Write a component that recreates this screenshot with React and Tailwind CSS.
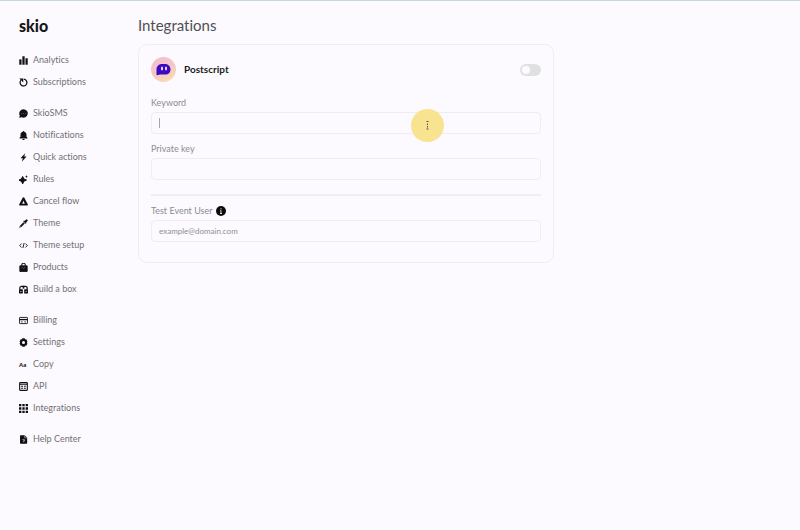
import React, { useState } from 'react';

const paths = {
  analytics: (
    <>
      <rect x="0.5" y="6" width="4" height="9.500" />
      <rect x="6" y="0.500" width="4" height="15" />
      <rect x="11.500" y="4" width="4" height="11.500" />
    </>
  ),
  subscriptions: (
    <>
      <path d="M3.300 4.400A6 6 0 1 0 8.500 2.200" fill="none" stroke="currentColor" strokeWidth="2.200" />
      <path d="M.5.800h7v7z" />
    </>
  ),
  sms: (
    <>
      <path d="M8 .3a7.600 7.600 0 1 1-3.200 14.500L.4 15.700l1-4.200A7.600 7.600 0 0 1 8 .3z" />
      <path d="M4 8h1.600M7.200 8h1.600M10.400 8H12" stroke="#777" strokeWidth="1.200" />
    </>
  ),
  bell: <path d="M8 0c.9 0 1.400.6 1.400 1.400 2.400.6 3.900 2.500 3.900 5.100v3.700l1.700 2v1.100H1v-1.100l1.700-2V6.500c0-2.600 1.500-4.500 3.900-5.100C6.600.6 7.100 0 8 0zM5.900 14h4.200a2.100 2.100 0 0 1-4.200 0z" />,
  bolt: <path d="M11 .3 2.700 9.300h4.100L5 15.700l8.500-9.500H9.300z" />,
  rules: (
    <>
      <path d="M6.500 3 8.500 7l4.500 2-4.500 2-2 4-2-4L0 9l4.500-2z" strokeWidth="2" stroke="currentColor" strokeLinejoin="round" />
      <path d="m13.300 0 .8 2 1.900.8-1.900.8-.8 2-.8-2-1.900-.8 1.900-.8z" />
    </>
  ),
  cancel: <path fillRule="evenodd" d="M8 .5c.7 0 1.200.3 1.500.9l6.200 11.800c.5 1.100-.1 2.100-1.200 2.100h-13c-1.100 0-1.700-1-1.200-2.100L6.500 1.400C6.800.8 7.300.5 8 .5zm0 6.300-2.300 5h4.600z" />,
  theme: (
    <>
      <path d="M10 3.400 12.200 1.200a1.800 1.800 0 0 1 2.600 2.600l-2.200 2.200.8.9-1.500 1.500-4.400-4.400 1.500-1.500z" />
      <path d="m9.200 6.800-6.700 6.700" fill="none" stroke="currentColor" strokeWidth="3.400" />
      <path d="m.8 12.800 2.400 2.400-2.700.3z" />
    </>
  ),
  code: <path d="M4.600 4.500 1.200 8l3.400 3.500M11.400 4.500 14.800 8l-3.400 3.500M9.100 3.500 6.900 12.500" fill="none" stroke="currentColor" strokeWidth="1.600" />,
  products: (
    <>
      <path d="M1.500 5h13v10h-13z" strokeLinejoin="round" stroke="currentColor" strokeWidth="1.600" />
      <path d="M4.800 5V3.800a3.200 3.200 0 0 1 6.400 0V5" fill="none" stroke="currentColor" strokeWidth="1.900" />
      <path d="M5.300 6.800a2.700 2.700 0 0 0 5.400 0" fill="none" stroke="#777" />
    </>
  ),
  box: (
    <>
      <path d="M1.500 8V5.500a3 3 0 0 1 3-3h7a3 3 0 0 1 3 3V8" fill="none" stroke="currentColor" strokeWidth="2.200" />
      <rect x="0" y="7.500" width="6.800" height="7.500" rx="1" />
      <rect x="9.200" y="7.500" width="6.800" height="7.500" rx="1" />
      <path d="M6.500 1.500h3v5h-3z" />
      <path d="M2 11.500h2.500M11.500 11.500H14" stroke="#eee" strokeWidth="1.200" />
    </>
  ),
  billing: (
    <>
      <rect x="0.800" y="2.500" width="14.400" height="11" rx="1.200" fill="none" stroke="currentColor" strokeWidth="1.600" />
      <path d="M1 5.200h14v2.400H1z" />
      <path d="M3.500 10.500h3M9.500 10.500h3" stroke="currentColor" strokeWidth="1.400" />
    </>
  ),
  settings: <path fillRule="evenodd" d="M6 .5h4l.8 1.700 2.100.2 2 3.500L14.200 8l.7 2.100-2 3.500-2.100.2-.8 1.700H6l-.8-1.700-2.100-.2-2-3.500L1.800 8l-.7-2.100 2-3.500 2.100-.2zM8 5.300a2.700 2.700 0 1 0 0 5.400 2.700 2.700 0 0 0 0-5.400z" />,
  api: (
    <>
      <rect x="1.200" y="1.200" width="13.600" height="13.600" rx="1" fill="none" stroke="currentColor" strokeWidth="2" />
      <path d="M1 4h14" stroke="currentColor" strokeWidth="1.800" />
      <path d="M3.800 7.500h3.400M8.800 7.500h3.400M3.800 11h3.400M8.800 11h3.400" stroke="currentColor" strokeWidth="1.900" />
    </>
  ),
  grid: (
    <path d="M0 0h4.200v4.200H0zM5.900 0h4.200v4.200H5.900zM11.800 0H16v4.200h-4.200zM0 5.900h4.200v4.200H0zM5.900 5.900h4.200v4.200H5.900zM11.800 5.900H16v4.200h-4.200zM0 11.800h4.200V16H0zM5.900 11.800h4.200V16H5.900zM11.800 11.800H16V16h-4.200z" />
  ),
  help: (
    <>
      <path d="M3 .5h7L14.500 5v9.300c0 .7-.4 1.200-1.100 1.200H3c-.7 0-1.200-.5-1.200-1.200V1.700C1.800 1 2.300.5 3 .5z" />
      <path d="M10 .5V5h4.500" fill="none" stroke="#ddd" strokeWidth="0.900" />
      <path d="M6 8.300h3.800v2H8.200v2.200" fill="none" stroke="#ddd" strokeWidth="1.200" />
    </>
  ),
};

const groups = [
  [
    { label: 'Analytics', icon: 'analytics' },
    { label: 'Subscriptions', icon: 'subscriptions' },
  ],
  [
    { label: 'SkioSMS', icon: 'sms' },
    { label: 'Notifications', icon: 'bell' },
    { label: 'Quick actions', icon: 'bolt' },
    { label: 'Rules', icon: 'rules' },
    { label: 'Cancel flow', icon: 'cancel' },
    { label: 'Theme', icon: 'theme' },
    { label: 'Theme setup', icon: 'code' },
    { label: 'Products', icon: 'products' },
    { label: 'Build a box', icon: 'box' },
  ],
  [
    { label: 'Billing', icon: 'billing' },
    { label: 'Settings', icon: 'settings' },
    { label: 'Copy', icon: 'text' },
    { label: 'API', icon: 'api' },
    { label: 'Integrations', icon: 'grid' },
  ],
  [{ label: 'Help Center', icon: 'help' }],
];

const NavIcon = ({ name }) => {
  if (name === 'text') {
    return (
      <span aria-hidden="true" className="w-[9px] text-[6px] font-black text-[#222]">
        Aa
      </span>
    );
  }
  return (
    <svg viewBox="0 0 16 16" fill="currentColor" aria-hidden="true" className="size-[9px] shrink-0 text-[#111]">
      {paths[name]}
    </svg>
  );
};

const Sidebar = () => (
  <aside className="w-[138px] shrink-0 pt-[17px] pl-[19px]">
    <a href="#home" className="block text-[16px] leading-4 font-black text-[#161616]">
      skio
    </a>
    <nav className="mt-[15px] flex flex-col gap-[9px]">
      {groups.map((group) => (
        <ul key={group[0].label}>
          {group.map((item) => (
            <li key={item.label}>
              <a href={`#${item.icon}`} className="flex h-[22px] items-center gap-[5px] text-[9px] whitespace-nowrap text-[#727174]">
                <NavIcon name={item.icon} />
                {item.label}
              </a>
            </li>
          ))}
        </ul>
      ))}
    </nav>
  </aside>
);

const PostscriptLogo = () => (
  <svg viewBox="0 0 50 50" aria-hidden="true" className="size-[25px]">
    <defs>
      <linearGradient id="halo" x1="0.2" y1="0" x2="0.7" y2="1">
        <stop offset="0" stopColor="#f3bfd0" />
        <stop offset="0.5" stopColor="#f6c5c8" />
        <stop offset="1" stopColor="#fadcae" />
      </linearGradient>
    </defs>
    <circle cx="25" cy="25" r="25" fill="url(#halo)" />
    <path d="M11 36V25c0-7 5-11 12-11h5c7 0 11 5 11 11s-4 10-11 10h-9c-3 0-4 2-8 1z" fill="#3b0bc4" />
    <ellipse cx="22" cy="23" rx="2" ry="4" fill="#f7dff0" />
    <ellipse cx="30" cy="23" rx="2" ry="4" fill="#f7dff0" />
  </svg>
);

const labelClass = 'flex h-3.5 items-center gap-1 text-[9px] text-[#8d8c8f]';
const inputClass =
  'block h-[22px] w-full rounded-[4px] border border-[#efedf0] bg-transparent px-[7px] text-[8px] text-[#626164] outline-none placeholder:text-[#8f8e91]';

const App = () => {
  const [enabled, setEnabled] = useState(false);
  const [keyword, setKeyword] = useState('');
  const [privateKey, setPrivateKey] = useState('');
  const [testUser, setTestUser] = useState('');

  return (
    <div className="flex min-h-screen border-t border-[#c6d5df] bg-[#fcfafe] font-['Lato','Open_Sans',sans-serif] [font-variant-ligatures:none]">
      <Sidebar />

      <main className="min-w-0 grow pt-[14px] pr-4">
        <h1 className="text-[15px] leading-5 text-[#504f52]">Integrations</h1>

        <section className="mt-[9px] w-full max-w-[416px] rounded-[9px] border border-[#efedf0] px-3 pt-3 pb-5">
          <div className="mb-3.5 flex items-center justify-between">
            <div className="flex items-center gap-2">
              <PostscriptLogo />
              <h2 className="text-[10px] font-bold text-[#1b1a1d]">Postscript</h2>
            </div>
            <button
              type="button"
              role="switch"
              aria-checked={enabled}
              aria-label="Enable Postscript"
              onClick={() => setEnabled((prev) => !prev)}
              className={`flex h-3 w-[21px] items-center rounded-full px-0.5 ${enabled ? 'justify-end bg-[#3b0bc4]' : 'bg-[#e0dfe1]'}`}
            >
              <span className="size-2 rounded-full bg-[#fcfafe]" />
            </button>
          </div>

          <form className="flex flex-col gap-2">
            <div>
              <label htmlFor="keyword" className={labelClass}>Keyword</label>
              <div className="relative mt-0.5">
                <input
                  id="keyword"
                  type="text"
                  value={keyword}
                  onChange={(e) => setKeyword(e.target.value)}
                  className={inputClass}
                />
                {/* Text caret and pointer highlight */}
                <span className="pointer-events-none absolute top-1.5 left-2 h-2.5 w-px bg-[#a5a4a7]" />
                <span className="pointer-events-none absolute -top-[3px] left-[260px] flex size-[33px] items-center justify-center rounded-full bg-[#f8e391]">
                  <svg viewBox="0 0 5 9" aria-hidden="true" className="h-[9px] w-[5px]" fill="none" stroke="#55504a">
                    <path d="M1.500 .5h2M2.500 2.500v1.500M2.500 5v1.500M1.500 8h2" />
                  </svg>
                </span>
              </div>
            </div>

            <div>
              <label htmlFor="private-key" className={labelClass}>Private key</label>
              <input
                id="private-key"
                type="text"
                value={privateKey}
                onChange={(e) => setPrivateKey(e.target.value)}
                className={`mt-0.5 ${inputClass}`}
              />
            </div>

            <hr className="mt-1.5 border-t-2 border-[#f0eef1]" />

            <div>
              <label htmlFor="test-user" className={labelClass}>
                Test Event User
                <svg viewBox="0 0 10 10" aria-hidden="true" className="size-2.5">
                  <circle cx="5" cy="5" r="5" fill="#0c0c0c" />
                  <path d="M5 2.200v1.200M4.300 4.500H5v3M4 7.500h2" fill="none" stroke="#d8d8d8" />
                </svg>
              </label>
              <input
                id="test-user"
                type="email"
                placeholder="example@domain.com"
                value={testUser}
                onChange={(e) => setTestUser(e.target.value)}
                className={`mt-0.5 ${inputClass}`}
              />
            </div>
          </form>
        </section>
      </main>
    </div>
  );
};

export default App;
